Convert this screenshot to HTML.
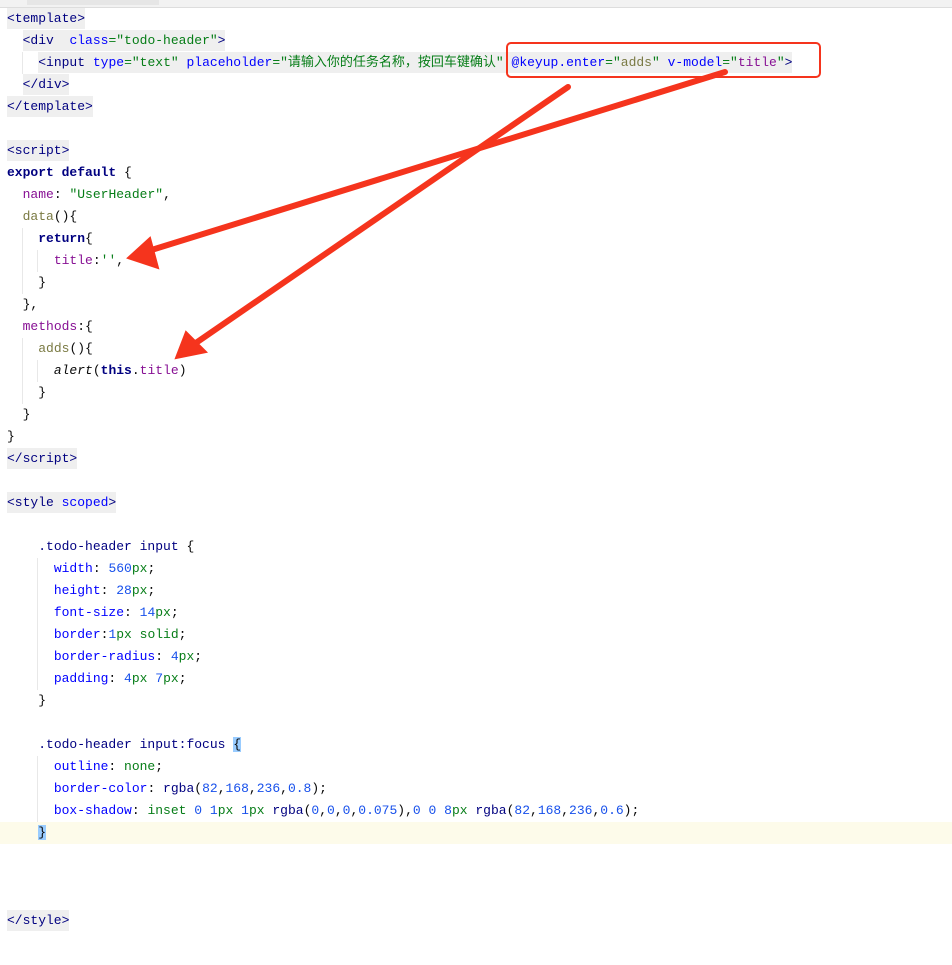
<!DOCTYPE html><html><head><meta charset="utf-8"><style>
body{margin:0;width:952px;height:965px;background:#fff;overflow:hidden;position:relative;font-family:"Liberation Mono","Noto Sans CJK SC",monospace;font-size:13px}
.top{position:absolute;left:0;top:0;width:952px;height:7px;background:#f2f2f2;border-bottom:1px solid #ddd}
.tab{position:absolute;left:27px;top:0;width:132px;height:5px;background:#e6e6e6}
.l{position:absolute;left:7px;height:22px;line-height:22px;white-space:pre;color:#080808}
.cur{position:absolute;left:0;top:822px;width:952px;height:22px;background:#fdfbea}
.t{color:#000080}.a{color:#0000ff}.s{color:#067d17}.k{color:#000080;font-weight:bold}.p{color:#871094}.n{color:#1750eb}.f{color:#7a7a43}
.hl{background:#efefef;display:inline-block;height:21px}
.fb{background:#99ccff}
.g{position:absolute;width:1px;background:#e8e8e8}
</style></head><body>
<div class="top"></div><div class="tab"></div>
<div class="cur"></div>
<div class="l" style="top:8px"><span class="hl"><span class="t">&lt;template&gt;</span></span></div>
<div class="l" style="top:30px">  <span class="hl"><span class="t">&lt;div</span>  <span class="a">class</span><span class="s">="todo-header"</span><span class="t">&gt;</span></span></div>
<div class="l" style="top:52px">    <span class="hl"><span class="t">&lt;input</span> <span class="a">type</span><span class="s">="text"</span> <span class="a">placeholder</span><span class="s">="请输入你的任务名称，按回车键确认"</span> <span class="a">@keyup.enter</span><span class="s">="</span><span class="f">adds</span><span class="s">"</span> <span class="a">v-model</span><span class="s">="</span><span class="p">title</span><span class="s">"</span><span class="t">&gt;</span></span></div>
<div class="l" style="top:74px">  <span class="hl"><span class="t">&lt;/div&gt;</span></span></div>
<div class="l" style="top:96px"><span class="hl"><span class="t">&lt;/template&gt;</span></span></div>
<div class="l" style="top:140px"><span class="hl"><span class="t">&lt;script&gt;</span></span></div>
<div class="l" style="top:162px"><span class="k">export default</span> {</div>
<div class="l" style="top:184px">  <span class="p">name</span>: <span class="s">"UserHeader"</span>,</div>
<div class="l" style="top:206px">  <span class="f">data</span>(){</div>
<div class="l" style="top:228px">    <span class="k">return</span>{</div>
<div class="l" style="top:250px">      <span class="p">title</span>:<span class="s">''</span>,</div>
<div class="l" style="top:272px">    }</div>
<div class="l" style="top:294px">  },</div>
<div class="l" style="top:316px">  <span class="p">methods</span>:{</div>
<div class="l" style="top:338px">    <span class="f">adds</span>(){</div>
<div class="l" style="top:360px">      <i>alert</i>(<span class="k">this</span>.<span class="p">title</span>)</div>
<div class="l" style="top:382px">    }</div>
<div class="l" style="top:404px">  }</div>
<div class="l" style="top:426px">}</div>
<div class="l" style="top:448px"><span class="hl"><span class="t">&lt;/script&gt;</span></span></div>
<div class="l" style="top:492px"><span class="hl"><span class="t">&lt;style </span><span class="a">scoped</span><span class="t">&gt;</span></span></div>
<div class="l" style="top:536px">    <span class="t">.todo-header input</span> {</div>
<div class="l" style="top:558px">      <span class="a">width</span>: <span class="n">560</span><span class="s">px</span>;</div>
<div class="l" style="top:580px">      <span class="a">height</span>: <span class="n">28</span><span class="s">px</span>;</div>
<div class="l" style="top:602px">      <span class="a">font-size</span>: <span class="n">14</span><span class="s">px</span>;</div>
<div class="l" style="top:624px">      <span class="a">border</span>:<span class="n">1</span><span class="s">px solid</span>;</div>
<div class="l" style="top:646px">      <span class="a">border-radius</span>: <span class="n">4</span><span class="s">px</span>;</div>
<div class="l" style="top:668px">      <span class="a">padding</span>: <span class="n">4</span><span class="s">px</span> <span class="n">7</span><span class="s">px</span>;</div>
<div class="l" style="top:690px">    }</div>
<div class="l" style="top:734px">    <span class="t">.todo-header input:focus</span> <span class="fb">{</span></div>
<div class="l" style="top:756px">      <span class="a">outline</span>: <span class="s">none</span>;</div>
<div class="l" style="top:778px">      <span class="a">border-color</span>: <span class="t">rgba</span>(<span class="n">82</span>,<span class="n">168</span>,<span class="n">236</span>,<span class="n">0.8</span>);</div>
<div class="l" style="top:800px">      <span class="a">box-shadow</span>: <span class="s">inset</span> <span class="n">0</span> <span class="n">1</span><span class="s">px</span> <span class="n">1</span><span class="s">px</span> <span class="t">rgba</span>(<span class="n">0</span>,<span class="n">0</span>,<span class="n">0</span>,<span class="n">0.075</span>),<span class="n">0</span> <span class="n">0</span> <span class="n">8</span><span class="s">px</span> <span class="t">rgba</span>(<span class="n">82</span>,<span class="n">168</span>,<span class="n">236</span>,<span class="n">0.6</span>);</div>
<div class="l" style="top:822px">    <span class="fb">}</span></div>
<div class="l" style="top:910px"><span class="hl"><span class="t">&lt;/style&gt;</span></span></div>
<div class="g" style="left:22px;top:52px;height:22px"></div>
<div class="g" style="left:22px;top:228px;height:66px"></div>
<div class="g" style="left:37px;top:250px;height:22px"></div>
<div class="g" style="left:22px;top:338px;height:66px"></div>
<div class="g" style="left:37px;top:360px;height:22px"></div>
<div class="g" style="left:37px;top:558px;height:132px"></div>
<div class="g" style="left:37px;top:756px;height:66px"></div>
<svg width="952" height="965" style="position:absolute;left:0;top:0">
<g stroke="#f5341d" stroke-width="6" stroke-linecap="round" fill="#f5341d">
<line x1="725" y1="72" x2="145" y2="252"/>
<line x1="568" y1="87" x2="190" y2="347"/>
<polygon points="128,258 150,238 158,268" stroke-width="2"/>
<polygon points="176,358 186,332 206,352" stroke-width="2"/>
</g>
<rect x="507" y="43" width="313" height="34" rx="4" fill="none" stroke="#f5341d" stroke-width="2"/>
</svg>
</body></html>
